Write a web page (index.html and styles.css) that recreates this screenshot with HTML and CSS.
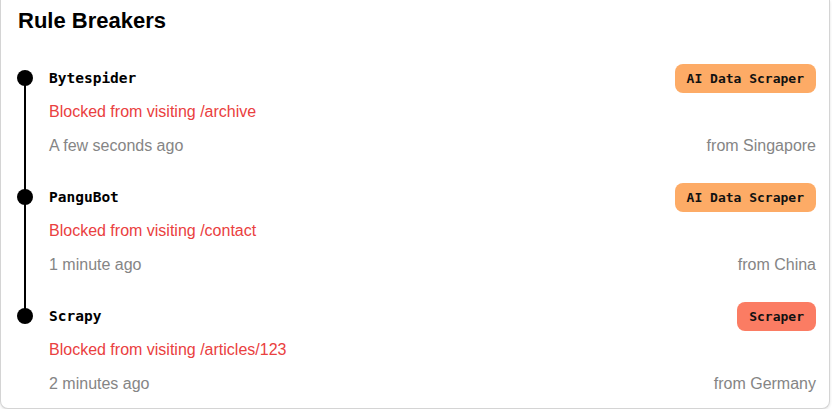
FILE: index.html
```html
<!DOCTYPE html>
<html lang="en">
<head>
  <meta charset="UTF-8" />
  <meta name="viewport" content="width=device-width, initial-scale=1.0" />
  <title>Rule Breakers</title>
  <link rel="stylesheet" href="styles.css">
</head>
<body>
  <section class="card">
    <h2>Rule Breakers</h2>
    <div class="timeline">
      <div class="event">
        <span class="dot"></span>
        <span class="bot">Bytespider</span>
        <span class="badge ai">AI Data Scraper</span>
        <span class="blocked">Blocked from visiting /archive</span>
        <span class="when">A few seconds ago</span>
        <span class="where">from Singapore</span>
      </div>
      <div class="event">
        <span class="dot"></span>
        <span class="bot">PanguBot</span>
        <span class="badge ai">AI Data Scraper</span>
        <span class="blocked">Blocked from visiting /contact</span>
        <span class="when">1 minute ago</span>
        <span class="where">from China</span>
      </div>
      <div class="event">
        <span class="dot"></span>
        <span class="bot">Scrapy</span>
        <span class="badge scraper">Scraper</span>
        <span class="blocked">Blocked from visiting /articles/123</span>
        <span class="when">2 minutes ago</span>
        <span class="where">from Germany</span>
      </div>
    </div>
  </section>
</body>
</html>
```

FILE: styles.css
```css
body {
  margin: 0;
  font-family: "Liberation Sans", Arial, sans-serif;
  background: #fff;
  color: #111;
}
.card {
  box-sizing: border-box;
  width: 830px;
  padding: 8px 13px 7px 16px;
  border: 1px solid #d4d4d4;
  border-top: none;
  border-radius: 0 0 8px 8px;
  box-shadow: 0 1px 3px rgba(0,0,0,0.12);
  background: #fff;
}
.card h2 {
  margin: 0 0 27px 1px;
  font-size: 22px;
  line-height: 26px;
  font-weight: bold;
  color: #000;
}
.event {
  position: relative;
  display: grid;
  grid-template-columns: 32px 1fr auto;
  grid-template-rows: 34px 34px 34px;
  align-items: center;
  padding-bottom: 17px;
}
.event:last-child {
  padding-bottom: 0;
}
.event:not(:last-child)::before {
  content: "";
  position: absolute;
  left: 7px;
  top: 17px;
  width: 2px;
  height: 119px;
  background: #000;
}
.dot {
  width: 16px;
  height: 16px;
  border-radius: 50%;
  background: #000;
}
.bot {
  font-family: "DejaVu Sans Mono", "Liberation Mono", monospace;
  font-weight: bold;
  font-size: 14.5px;
  color: #000;
}
.badge {
  justify-self: end;
  height: 29px;
  line-height: 29px;
  padding: 0 12px;
  border-radius: 8px;
  font-family: "DejaVu Sans Mono", "Liberation Mono", monospace;
  font-weight: bold;
  font-size: 13px;
  color: #111;
}
.badge.ai {
  background: #fdab66;
}
.badge.scraper {
  background: #fb7c63;
}
.blocked {
  grid-column: 2 / 4;
  font-size: 16px;
  color: #ea4040;
}
.when {
  grid-column: 2;
  font-size: 16px;
  color: #858585;
}
.where {
  justify-self: end;
  font-size: 16px;
  color: #858585;
}
```
